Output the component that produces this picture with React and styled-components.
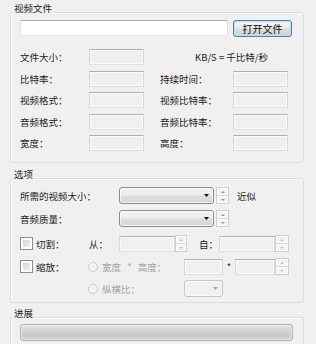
import React from 'react';
import styled, { createGlobalStyle } from 'styled-components';

const Global = createGlobalStyle`
  html, body { margin: 0; padding: 0; background: #f0f0f0; overflow: hidden; }
  body {
    font-family: "Noto Sans CJK SC", "Noto Sans", sans-serif;
    font-size: 9.5px;
    color: #1c1c1c;
  }
  * { box-sizing: border-box; }
`;

const Page = styled.div`
  width: 316px;
  height: 344px;
  padding: 12px 12px 0 10px;
  display: flex;
  flex-direction: column;
  overflow: hidden;
`;

const Group = styled.section`
  position: relative;
  flex: none;
  border: 1px solid #d5dfe5;
  border-radius: 3px;
  box-shadow: inset 1px 1px 0 #fff;
  margin-top: ${p => p.$mt || 0}px;
  padding: ${p => p.$pad};
`;

const Legend = styled.span`
  position: absolute;
  top: -11px;
  left: 2px;
  padding: 0 1px;
  line-height: 12px;
  font-size: 9.5px;
  background: #f0f0f0;
`;

const TopRow = styled.div`
  display: flex;
  align-items: flex-start;
  gap: 5px;
`;

const FileInput = styled.input`
  width: 208px;
  height: 16px;
  margin: 0;
  padding: 0 2px;
  font: inherit;
  background: #fff;
  border: 1px solid;
  border-color: #abadb3 #dbdfe6 #e3e9ef #e2e3ea;
  outline: none;
`;

const PushButton = styled.button`
  width: 59px;
  height: 17px;
  margin: 0;
  padding: 0;
  font-family: inherit;
  font-size: 10px;
  line-height: 15px;
  color: #111;
  border: 1px solid #4f7dab;
  border-radius: 3px;
  background: linear-gradient(#f4f4f4, #ebebeb 48%, #dcdcdc 52%, #d0d0d0);
  box-shadow: inset 0 0 0 1px #b4dff7;
`;

const InfoGrid = styled.div`
  display: grid;
  grid-template-columns: 69px 55px 89px 55px;
  grid-auto-rows: 16px;
  row-gap: 5.5px;
  margin-top: 12px;
  align-items: center;
`;

const Label = styled.span`
  white-space: nowrap;
  padding-left: ${p => p.$pl || 0}px;
  grid-column: ${p => p.$span || 'auto'};
`;

const ReadBox = styled.input`
  width: ${p => p.$w || 55}px;
  height: 16px;
  margin: 0;
  padding: 0;
  font: inherit;
  background: #f0f0f0;
  border: 1px solid;
  border-color: #b0b0b0 #d8d8d8 #e0e0e0 #d8d8d8;
  box-shadow: inset 0 0 0 1px #fafafa;
  outline: none;
  flex: none;
`;

const Row = styled.div`
  display: flex;
  align-items: center;
  height: 17px;
  margin-top: ${p => p.$mt || 0}px;
`;

const Cell = styled.span`
  flex: none;
  display: flex;
  align-items: center;
  gap: ${p => p.$gap || 0}px;
  width: ${p => p.$w}px;
  padding-left: ${p => p.$pl || 0}px;
  white-space: pre;
  word-spacing: ${p => p.$ws || 0}px;
  color: ${p => (p.$off ? '#a3a3a3' : 'inherit')};
  justify-content: ${p => (p.$center ? 'center' : 'flex-start')};
`;

const Combo = styled.span`
  flex: none;
  display: flex;
  align-items: center;
  justify-content: flex-end;
  width: ${p => p.$w}px;
  height: 17px;
  padding-right: 4px;
  border: 1px solid ${p => (p.$off ? '#c6c6c6' : '#8e8e8e')};
  border-radius: 3px;
  background: ${p =>
    p.$off
      ? '#f1f1f1'
      : 'linear-gradient(#f3f3f3, #ececec 45%, #dedede 55%, #d6d6d6)'};
  box-shadow: inset 0 0 0 1px ${p => (p.$off ? '#f9f9f9' : 'rgba(255,255,255,0.7)')};
`;

const Spin = styled.span`
  flex: none;
  display: flex;
  flex-direction: column;
  width: ${p => p.$w}px;
  height: ${p => p.$h || 17}px;
  margin-left: ${p => p.$ml || 0}px;
  border: 1px solid #c9cfd6;
  background: #f3f3f3;
`;

const SpinHalf = styled.span`
  flex: 1;
  display: flex;
  align-items: center;
  justify-content: center;
  box-shadow: inset 0 0 0 1px #fcfcfc;
  & + & { border-top: 1px solid #d5d9dd; }
`;

const CheckBox = styled.span`
  flex: none;
  width: 13px;
  height: 13px;
  border: 1px solid #8e8f8f;
  background: linear-gradient(135deg, #cfcfcf, #f7f7f7);
  box-shadow: inset 0 0 0 2px #fbfbfb;
`;

const Radio = styled.span`
  flex: none;
  width: 10px;
  height: 10px;
  border-radius: 50%;
  border: 1px solid #c6c6c6;
  background: #f2f2f2;
  box-shadow: inset 0 0 0 1px #fbfbfb;
`;

const Progress = styled.div`
  width: 273px;
  height: 17px;
  border: 1px solid #b0b0b0;
  border-radius: 3px;
  background: linear-gradient(#e4e4e4, #d4d4d4 40%, #c9c9c9 60%, #d2d2d2);
  box-shadow: inset 0 0 0 1px rgba(255, 255, 255, 0.45);
`;

const Tri = ({ dir = 'down', color = '#000', w = 5, h = 3 }) => (
  <svg width={w} height={h} viewBox={`0 0 ${w} ${h}`}>
    <polygon
      points={dir === 'down' ? `0,0 ${w},0 ${w / 2},${h}` : `0,${h} ${w},${h} ${w / 2},0`}
      fill={color}
    />
  </svg>
);

const Spinner = ({ w = 12, ml, off }) => (
  <Spin $w={w} $ml={ml}>
    <SpinHalf>
      <Tri dir="up" w={4} h={2} color={off ? '#c4c4c4' : '#8c9bab'} />
    </SpinHalf>
    <SpinHalf>
      <Tri dir="down" w={4} h={2} color={off ? '#c4c4c4' : '#8c9bab'} />
    </SpinHalf>
  </Spin>
);

const ComboBox = ({ w, off }) => (
  <Combo $w={w} $off={off}>
    <Tri color={off ? '#a8a8a8' : '#111'} />
  </Combo>
);

export default function App() {
  return (
    <>
      <Global />
      <Page>
        <Group $pad="7px 10px 11px 9px">
          <Legend>视频文件</Legend>
          <TopRow>
            <FileInput readOnly />
            <PushButton>打开文件</PushButton>
          </TopRow>
          <InfoGrid>
            <Label>文件大小：</Label>
            <ReadBox disabled />
            <Label $span="3 / 5" $pl={51}>KB/S = 千比特/秒</Label>

            <Label>比特率：</Label>
            <ReadBox disabled />
            <Label $pl={16}>持续时间：</Label>
            <ReadBox disabled />

            <Label>视频格式：</Label>
            <ReadBox disabled />
            <Label $pl={16}>视频比特率：</Label>
            <ReadBox disabled />

            <Label>音频格式：</Label>
            <ReadBox disabled />
            <Label $pl={16}>音频比特率：</Label>
            <ReadBox disabled />

            <Label>宽度：</Label>
            <ReadBox disabled />
            <Label $pl={16}>高度：</Label>
            <ReadBox disabled />
          </InfoGrid>
        </Group>

        <Group $mt={15} $pad="8px 10px 5px 9px">
          <Legend>选项</Legend>
          <Row>
            <Cell $w={99}>所需的视频大小：</Cell>
            <ComboBox w={95} />
            <Spinner w={13} ml={2} />
            <Cell $pl={8}>近似</Cell>
          </Row>
          <Row $mt={6}>
            <Cell $w={99}>音频质量：</Cell>
            <ComboBox w={95} />
            <Spinner w={13} ml={2} />
          </Row>
          <Row $mt={8}>
            <Cell $w={69} $gap={3}>
              <CheckBox />
              切割：
            </Cell>
            <Cell $w={30}>从：</Cell>
            <ReadBox disabled $w={56} />
            <Spinner w={12} off />
            <Cell $w={32} $pl={12}>自：</Cell>
            <ReadBox disabled $w={56} />
            <Spinner w={14} off />
          </Row>
          <Row $mt={6}>
            <Cell $w={68} $gap={3}>
              <CheckBox />
              缩放：
            </Cell>
            <Cell $w={96} $gap={4} $ws={4} $off>
              <Radio />
              宽度 * 高度：
            </Cell>
            <ReadBox disabled $w={39} />
            <Cell $w={12} $center>*</Cell>
            <ReadBox disabled $w={40} />
            <Spinner w={14} off />
          </Row>
          <Row $mt={5}>
            <Cell $w={68} />
            <Cell $w={96} $gap={4} $off>
              <Radio />
              纵横比：
            </Cell>
            <ComboBox w={39} off />
          </Row>
        </Group>

        <Group $mt={14} $pad="6px 10px 12px 9px">
          <Legend>进展</Legend>
          <Progress />
        </Group>
      </Page>
    </>
  );
}
